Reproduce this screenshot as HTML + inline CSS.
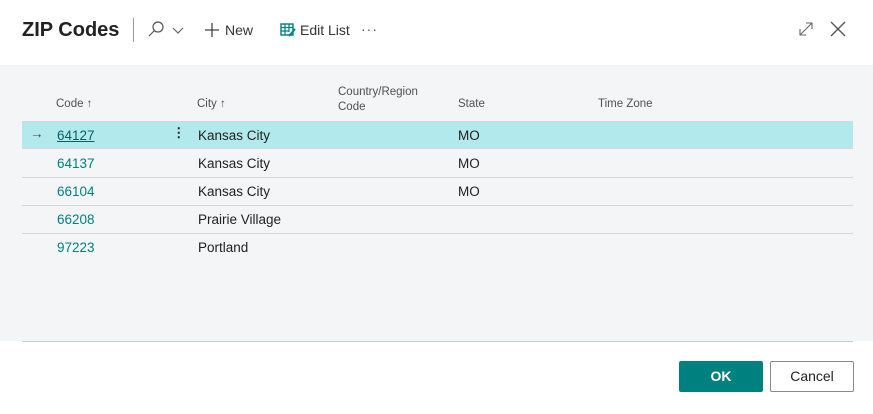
<!DOCTYPE html>
<html><head><style>
*{margin:0;padding:0;box-sizing:border-box}
body{width:873px;height:414px;background:#fff;font-family:"Liberation Sans",sans-serif;position:relative;overflow:hidden;color:#212121}
.a{position:absolute;white-space:nowrap}
.grey{position:absolute;left:0;top:65px;width:873px;height:276px;background:#f4f5f7}
.h{font-size:11.5px;color:#505050}
.r{position:absolute;left:22px;width:831px;height:28px;border-bottom:1px solid #d6d6d6;font-size:13.5px}
.r span{position:absolute;top:6px}
.c{color:#00807f}
</style></head><body>
<div class="a" style="left:22px;top:19px;font-size:20px;font-weight:bold;color:#222">ZIP Codes</div>
<div class="a" style="left:133px;top:18px;width:1px;height:24px;background:#999"></div>
<svg class="a" style="left:146px;top:20px" width="42" height="20"><circle cx="12" cy="7" r="5" fill="none" stroke="#555" stroke-width="1.2"/><line x1="8.5" y1="10.5" x2="3" y2="16" stroke="#555" stroke-width="1.2"/><polyline points="27,8 32,13 37,8" fill="none" stroke="#666" stroke-width="1.2"/></svg>
<svg class="a" style="left:204px;top:22px" width="16" height="16"><path d="M8 1V15M1 8H15" stroke="#444" stroke-width="1.3"/></svg>
<div class="a" style="left:225px;top:22px;font-size:14px;color:#333">New</div>
<svg class="a" style="left:280px;top:22px" width="16" height="16"><rect x="1" y="2" width="12" height="11" fill="none" stroke="#00807f" stroke-width="1.4"/><path d="M1 5.5H13M1 9H9M5 2V13M9 2V10" stroke="#00807f" stroke-width="1.2"/><path d="M9 14L15 7" stroke="#00807f" stroke-width="2"/></svg>
<div class="a" style="left:300px;top:22px;font-size:14px;color:#333">Edit List</div>
<div class="a" style="left:361px;top:21px;font-size:14px;color:#555;letter-spacing:1px">···</div>
<svg class="a" style="left:798px;top:21px" width="16" height="16"><path d="M2 14L14 2M8 2H14V8M2 8V14H8" fill="none" stroke="#666" stroke-width="1.1"/></svg>
<svg class="a" style="left:829px;top:20px" width="18" height="18"><path d="M2 2L16 16M16 2L2 16" stroke="#555" stroke-width="1.4"/></svg>
<div class="grey"></div>
<div class="a h" style="left:56px;top:98px">Code ↑</div>
<div class="a h" style="left:197px;top:98px">City ↑</div>
<div class="a h" style="left:338px;top:85px;line-height:15px">Country/Region<br>Code</div>
<div class="a h" style="left:458px;top:98px">State</div>
<div class="a h" style="left:598px;top:98px">Time Zone</div>
<div class="r" style="top:121px;background:#b2e9ec;border-top:1px solid #d6d6d6"><span style="left:8px;top:4px;color:#444">→</span><span class="c" style="left:35px;text-decoration:underline;color:#0a5f63">64127</span><span style="left:150px;top:3px;font-weight:bold">⋮</span><span style="left:176px">Kansas City</span><span style="left:436px">MO</span></div>
<div class="r" style="top:150px"><span class="c" style="left:35px">64137</span><span style="left:176px">Kansas City</span><span style="left:436px">MO</span></div>
<div class="r" style="top:178px"><span class="c" style="left:35px">66104</span><span style="left:176px">Kansas City</span><span style="left:436px">MO</span></div>
<div class="r" style="top:206px"><span class="c" style="left:35px">66208</span><span style="left:176px">Prairie Village</span></div>
<div class="r" style="top:234px;border-bottom:none"><span class="c" style="left:35px">97223</span><span style="left:176px">Portland</span></div>
<div class="a" style="left:22px;top:341px;width:831px;height:1px;background:#ccc"></div>
<div class="a" style="left:679px;top:361px;width:84px;height:31px;background:#00807f;border-radius:2px;color:#fff;font-weight:bold;font-size:14px;text-align:center;line-height:31px">OK</div>
<div class="a" style="left:770px;top:361px;width:84px;height:31px;border:1px solid #8a8a8a;border-radius:2px;font-size:14px;text-align:center;line-height:29px;color:#222">Cancel</div>
</body></html>
